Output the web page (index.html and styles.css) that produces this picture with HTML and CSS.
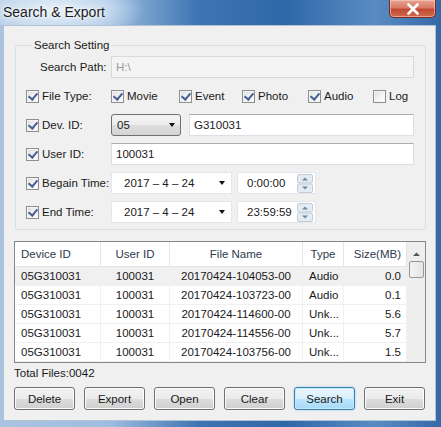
FILE: index.html
```html
<!DOCTYPE html>
<html>
<head>
<meta charset="utf-8">
<link rel="stylesheet" href="styles.css">
</head>
<body>
<div class="window">
  <div class="titlebar">
    <span class="title">Search &amp; Export</span>
    <div class="close"><svg width="14" height="12" viewBox="0 0 14 12"><path d="M2.5 1.5 L11.5 10.5 M11.5 1.5 L2.5 10.5" stroke="#fff" stroke-width="2.6" stroke-linecap="round"/></svg></div>
  </div>
  <div class="client">
    <fieldset class="group">
      <legend>Search Setting</legend>
      <div class="row">
        <span class="label path-label">Search Path:</span>
        <div class="input disabled grow">H:\</div>
      </div>
      <div class="row">
        <label class="label"><span class="cb on"></span>File Type:</label>
        <div class="types">
          <label class="opt w-movie"><span class="cb on"></span>Movie</label>
          <label class="opt w-event"><span class="cb on"></span>Event</label>
          <label class="opt w-photo"><span class="cb on"></span>Photo</label>
          <label class="opt w-audio"><span class="cb on"></span>Audio</label>
          <label class="opt"><span class="cb"></span>Log</label>
        </div>
      </div>
      <div class="row">
        <label class="label"><span class="cb on"></span>Dev. ID:</label>
        <div class="combo"><span>05</span><span class="tri"></span></div>
        <div class="input grow dev">G310031</div>
      </div>
      <div class="row">
        <label class="label"><span class="cb on"></span>User ID:</label>
        <div class="input grow">100031</div>
      </div>
      <div class="row">
        <label class="label"><span class="cb on"></span>Begain Time:</label>
        <div class="date"><span>2017 – 4 – 24</span><span class="tri"></span></div>
        <div class="time"><span>0:00:00</span><span class="spin"><svg width="16" height="19" viewBox="0 0 16 19"><rect x="0.5" y="0.5" width="15" height="8.5" rx="1.5" fill="#e3ebf3" stroke="#c3ccd6"/><rect x="0.5" y="10" width="15" height="8.5" rx="1.5" fill="#e3ebf3" stroke="#c3ccd6"/><path d="M5 6.5 L8 3.5 L11 6.5 Z" fill="#6f8aa6"/><path d="M5 12.5 L8 15.5 L11 12.5 Z" fill="#6f8aa6"/></svg></span></div>
      </div>
      <div class="row">
        <label class="label"><span class="cb on"></span>End Time:</label>
        <div class="date"><span>2017 – 4 – 24</span><span class="tri"></span></div>
        <div class="time"><span>23:59:59</span><span class="spin"><svg width="16" height="19" viewBox="0 0 16 19"><rect x="0.5" y="0.5" width="15" height="8.5" rx="1.5" fill="#e3ebf3" stroke="#c3ccd6"/><rect x="0.5" y="10" width="15" height="8.5" rx="1.5" fill="#e3ebf3" stroke="#c3ccd6"/><path d="M5 6.5 L8 3.5 L11 6.5 Z" fill="#6f8aa6"/><path d="M5 12.5 L8 15.5 L11 12.5 Z" fill="#6f8aa6"/></svg></span></div>
      </div>
    </fieldset>

    <div class="list">
      <div class="table">
        <div class="grid head">
          <div class="c left">Device ID</div>
          <div class="c center">User ID</div>
          <div class="c center">File Name</div>
          <div class="c center">Type</div>
          <div class="c right">Size(MB)</div>
        </div>
        <div class="grid row-item sel">
          <div class="c left">05G310031</div><div class="c center">100031</div><div class="c center">20170424-104053-00</div><div class="c left">Audio</div><div class="c right">0.0</div>
        </div>
        <div class="grid row-item">
          <div class="c left">05G310031</div><div class="c center">100031</div><div class="c center">20170424-103723-00</div><div class="c left">Audio</div><div class="c right">0.1</div>
        </div>
        <div class="grid row-item">
          <div class="c left">05G310031</div><div class="c center">100031</div><div class="c center">20170424-114600-00</div><div class="c left">Unk...</div><div class="c right">5.6</div>
        </div>
        <div class="grid row-item">
          <div class="c left">05G310031</div><div class="c center">100031</div><div class="c center">20170424-114556-00</div><div class="c left">Unk...</div><div class="c right">5.7</div>
        </div>
        <div class="grid row-item">
          <div class="c left">05G310031</div><div class="c center">100031</div><div class="c center">20170424-103756-00</div><div class="c left">Unk...</div><div class="c right">1.5</div>
        </div>
      </div>
      <div class="scrollbar">
        <svg class="arrow" width="9" height="6" viewBox="0 0 9 6"><path d="M1 5 L4.5 1.5 L8 5 Z" fill="#555"/></svg>
        <div class="thumb"></div>
      </div>
    </div>

    <div class="total">Total Files:0042</div>

    <div class="buttons">
      <button class="btn">Delete</button>
      <button class="btn">Export</button>
      <button class="btn">Open</button>
      <button class="btn">Clear</button>
      <button class="btn default">Search</button>
      <button class="btn">Exit</button>
    </div>
  </div>
</div>
</body>
</html>
```

FILE: styles.css
```css
* { box-sizing: border-box; }
html, body { margin: 0; padding: 0; }
body {
  width: 441px;
  height: 427px;
  overflow: hidden;
  font-family: "Liberation Sans", Arial, sans-serif;
  font-size: 11.5px;
  color: #1a1a1a;
}
.window {
  width: 441px;
  height: 427px;
  display: flex;
  flex-direction: column;
  background: linear-gradient(to right, #a9c4e0 0%, #9dbde0 25%, #3d74b2 45%, #2f68a8 65%, #5a8cc4 85%, #3568a6 100%);
}
.titlebar {
  height: 25px;
  flex: none;
  display: flex;
  align-items: flex-start;
  justify-content: space-between;
  background: radial-gradient(ellipse 90px 30px at 55px 10px, rgba(235,243,250,0.95) 0%, rgba(220,234,247,0.6) 60%, rgba(200,220,240,0) 100%);
}
.title {
  padding: 4px 0 0 3px;
  font-size: 14px;
  color: #1c1c1c;
  text-shadow: 0 0 6px #fff, 0 0 3px #fff;
}
.close {
  width: 47px;
  height: 18px;
  margin-right: 5px;
  border: 1px solid #7a2a20;
  border-top: none;
  border-radius: 0 0 5px 5px;
  background: linear-gradient(to bottom, #e8a394 0%, #d97a66 45%, #c24a32 55%, #cf6a4e 100%);
  box-shadow: inset 0 0 0 1px rgba(255,220,210,0.5);
  display: flex;
  align-items: center;
  justify-content: center;
}
.client {
  flex: 1;
  margin: 0 5px 6px 3px;
  background: #f0f0f0;
  border: 1px solid #b3c3d4;
  display: flex;
  flex-direction: column;
}
.group {
  margin: 12px 9px 0 11px;
  padding: 4px 11px 6px 10px;
  border: 1px solid #d5dfe5;
  border-radius: 3px;
  display: flex;
  flex-direction: column;
  gap: 7px;
  min-width: 0;
}
.group legend {
  padding: 0 2px;
  margin-left: 6px;
  font-size: 11.5px;
  line-height: 14px;
}
.row {
  display: flex;
  align-items: center;
  height: 22px;
}
.label {
  width: 85px;
  flex: none;
  display: flex;
  align-items: center;
  gap: 3px;
}
.path-label { padding-left: 14px; }
.cb {
  width: 13px;
  height: 13px;
  flex: none;
  border: 1px solid #8e8f8f;
  background: linear-gradient(135deg, #dcdcdc 0%, #f6f6f6 60%, #ffffff 100%);
  box-shadow: inset 0 0 0 1px #f4f4f4;
  display: inline-block;
  position: relative;
}
.cb.on::after {
  content: "";
  position: absolute;
  left: 3px;
  top: 0px;
  width: 4px;
  height: 7px;
  border-right: 2px solid #4a5f97;
  border-bottom: 2px solid #4a5f97;
  transform: rotate(40deg);
}
.types {
  display: flex;
  align-items: center;
}
.opt {
  display: flex;
  align-items: center;
  gap: 3px;
}
.w-movie { width: 68px; }
.w-event { width: 63px; }
.w-photo { width: 66px; }
.w-audio { width: 65px; }
.input {
  height: 22px;
  background: #fff;
  border: 1px solid #dbdfe6;
  border-top-color: #abadb3;
  display: flex;
  align-items: center;
  padding-left: 4px;
}
.input.disabled {
  background: #f4f4f4;
  border-color: #d9d9d9;
  color: #9a9a9a;
}
.grow { flex: 1; }
.dev { margin-left: 8px; }
.combo {
  width: 70px;
  height: 22px;
  border: 1px solid #707070;
  border-radius: 3px;
  background: linear-gradient(to bottom, #f4f4f4 0%, #ececec 50%, #dedede 51%, #d4d4d4 100%);
  display: flex;
  align-items: center;
  justify-content: space-between;
  padding: 0 5px 0 5px;
}
.tri {
  width: 0;
  height: 0;
  border-left: 3.5px solid transparent;
  border-right: 3.5px solid transparent;
  border-top: 4px solid #111;
}
.date {
  width: 121px;
  height: 22px;
  background: #fff;
  border: 1px solid #e3e6ea;
  display: flex;
  align-items: center;
  justify-content: space-between;
  padding: 0 6px 0 12px;
}
.time {
  width: 79px;
  height: 22px;
  margin-left: 5px;
  background: #fff;
  border: 1px solid #e3e6ea;
  display: flex;
  align-items: center;
  justify-content: space-between;
  padding: 0 2px 0 9px;
}
.spin { display: flex; }
.spin svg { display: block; }

.list {
  margin: 11px 9px 0 10px;
  height: 122px;
  border: 1px solid #828790;
  background: #fff;
  display: flex;
}
.table { width: 392px; flex: none; }
.grid {
  display: grid;
  grid-template-columns: 86px 69px 133px 41px 63px;
}
.head { height: 25px; border-bottom: 1px solid #e5e5e5; color: #2e3b4e; }
.head .c { border-right: 1px solid #e5e5e5; }
.row-item { height: 19px; border-bottom: 1px solid #f0f0f0; }
.row-item .c { border-right: 1px solid #f0f0f0; }
.row-item.sel { background: #f0f0f0; }
.c {
  display: flex;
  align-items: center;
  padding: 0 5px 0 6px;
  white-space: nowrap;
  overflow: hidden;
}
.left { justify-content: flex-start; }
.center { justify-content: center; padding: 0; }
.right { justify-content: flex-end; }
.scrollbar {
  flex: 1;
  background: #eeeeee;
  display: flex;
  flex-direction: column;
  align-items: center;
  padding-top: 9px;
}
.arrow { display: block; }
.thumb {
  margin-top: 4px;
  width: 15px;
  height: 17px;
  border: 1px solid #979797;
  border-radius: 2px;
  background: linear-gradient(to right, #f3f3f3, #e4e4e4);
}
.total {
  margin: 3px 0 0 10px;
  line-height: 14px;
}
.buttons {
  margin: 7px 9px 0 10px;
  display: flex;
  gap: 9px;
}
.btn {
  width: 61px;
  height: 23px;
  font-family: inherit;
  font-size: 11.5px;
  color: #1a1a1a;
  border: 1px solid #707070;
  border-radius: 3px;
  background: linear-gradient(to bottom, #f2f2f2 0%, #ebebeb 50%, #dddddd 51%, #cfcfcf 100%);
  box-shadow: inset 0 0 0 1px #fcfcfc;
  padding: 0;
}
.btn.default {
  border-color: #3c7fb1;
  background: linear-gradient(to bottom, #eaf6fd 0%, #d9f0fc 50%, #bee6fd 51%, #a7d9f5 100%);
  box-shadow: inset 0 0 0 1px #c5eaff, 0 0 2px #7ec4ea;
}
```
